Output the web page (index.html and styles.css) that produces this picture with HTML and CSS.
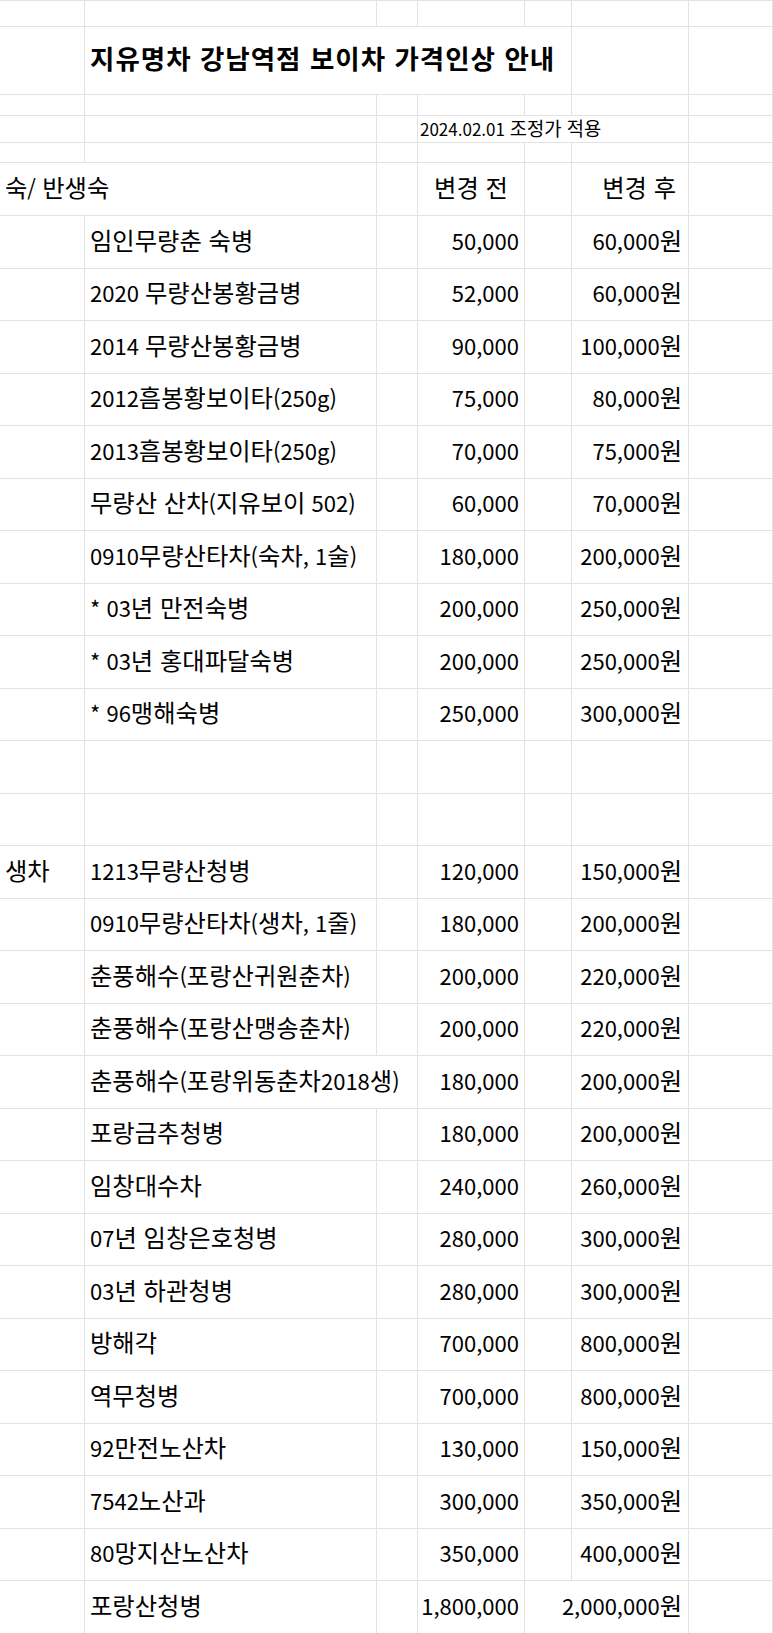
FILE: index.html
```html
<!DOCTYPE html>
<html lang="ko">
<head>
<meta charset="utf-8">
<title>지유명차 강남역점 보이차 가격인상 안내</title>
<link rel="stylesheet" href="styles.css">
</head>
<body>
<div class="sheet">
  <div class="row h-top"><div class="c"></div><div class="c"></div><div class="c"></div><div class="c"></div><div class="c"></div><div class="c"></div><div class="c"></div></div>
  <div class="row h-title"><div class="c"></div><div class="c span4 title"><span class="t">지유명차 강남역점 보이차 가격인상 안내</span></div><div class="c"></div><div class="c"></div></div>
  <div class="row h-21"><div class="c"></div><div class="c"></div><div class="c"></div><div class="c"></div><div class="c"></div><div class="c"></div><div class="c"></div></div>
  <div class="row h-27"><div class="c"></div><div class="c"></div><div class="c"></div><div class="c span3 date"><span class="t">2024.02.01 <span class="k">조정가 적용</span></span></div><div class="c"></div></div>
  <div class="row h-20"><div class="c"></div><div class="c"></div><div class="c"></div><div class="c"></div><div class="c"></div><div class="c"></div><div class="c"></div></div>
  <div class="row h-head"><div class="c span2 name"><span class="t"><span class="k">숙</span>/ <span class="k">반생숙</span></span></div><div class="c"></div><div class="c center"><span class="t k">변경 전</span></div><div class="c"></div><div class="c head-after"><span class="t k">변경 후</span></div><div class="c"></div></div>

  <div class="row item"><div class="c"></div><div class="c name"><span class="t k">임인무량춘 숙병</span></div><div class="c"></div><div class="c num"><span class="t">50,000</span></div><div class="c"></div><div class="c won"><span class="t">60,000<span class="k">원</span></span></div><div class="c"></div></div>
  <div class="row item"><div class="c"></div><div class="c name"><span class="t">2020 <span class="k">무량산봉황금병</span></span></div><div class="c"></div><div class="c num"><span class="t">52,000</span></div><div class="c"></div><div class="c won"><span class="t">60,000<span class="k">원</span></span></div><div class="c"></div></div>
  <div class="row item"><div class="c"></div><div class="c name"><span class="t">2014 <span class="k">무량산봉황금병</span></span></div><div class="c"></div><div class="c num"><span class="t">90,000</span></div><div class="c"></div><div class="c won"><span class="t">100,000<span class="k">원</span></span></div><div class="c"></div></div>
  <div class="row item"><div class="c"></div><div class="c name"><span class="t">2012<span class="k">흠봉황보이타</span>(250g)</span></div><div class="c"></div><div class="c num"><span class="t">75,000</span></div><div class="c"></div><div class="c won"><span class="t">80,000<span class="k">원</span></span></div><div class="c"></div></div>
  <div class="row item"><div class="c"></div><div class="c name"><span class="t">2013<span class="k">흠봉황보이타</span>(250g)</span></div><div class="c"></div><div class="c num"><span class="t">70,000</span></div><div class="c"></div><div class="c won"><span class="t">75,000<span class="k">원</span></span></div><div class="c"></div></div>
  <div class="row item"><div class="c"></div><div class="c name"><span class="t"><span class="k">무량산 산차</span>(<span class="k">지유보이</span> 502)</span></div><div class="c"></div><div class="c num"><span class="t">60,000</span></div><div class="c"></div><div class="c won"><span class="t">70,000<span class="k">원</span></span></div><div class="c"></div></div>
  <div class="row item"><div class="c"></div><div class="c name"><span class="t">0910<span class="k">무량산타차</span>(<span class="k">숙차</span>, 1<span class="k">술</span>)</span></div><div class="c"></div><div class="c num"><span class="t">180,000</span></div><div class="c"></div><div class="c won"><span class="t">200,000<span class="k">원</span></span></div><div class="c"></div></div>
  <div class="row item"><div class="c"></div><div class="c name"><span class="t">* 03<span class="k">년 만전숙병</span></span></div><div class="c"></div><div class="c num"><span class="t">200,000</span></div><div class="c"></div><div class="c won"><span class="t">250,000<span class="k">원</span></span></div><div class="c"></div></div>
  <div class="row item"><div class="c"></div><div class="c name"><span class="t">* 03<span class="k">년 홍대파달숙병</span></span></div><div class="c"></div><div class="c num"><span class="t">200,000</span></div><div class="c"></div><div class="c won"><span class="t">250,000<span class="k">원</span></span></div><div class="c"></div></div>
  <div class="row item"><div class="c"></div><div class="c name"><span class="t">* 96<span class="k">맹해숙병</span></span></div><div class="c"></div><div class="c num"><span class="t">250,000</span></div><div class="c"></div><div class="c won"><span class="t">300,000<span class="k">원</span></span></div><div class="c"></div></div>
  <div class="row item"><div class="c"></div><div class="c"></div><div class="c"></div><div class="c"></div><div class="c"></div><div class="c"></div><div class="c"></div></div>
  <div class="row item"><div class="c"></div><div class="c"></div><div class="c"></div><div class="c"></div><div class="c"></div><div class="c"></div><div class="c"></div></div>

  <div class="row item"><div class="c name"><span class="t k">생차</span></div><div class="c name"><span class="t">1213<span class="k">무량산청병</span></span></div><div class="c"></div><div class="c num"><span class="t">120,000</span></div><div class="c"></div><div class="c won"><span class="t">150,000<span class="k">원</span></span></div><div class="c"></div></div>
  <div class="row item"><div class="c"></div><div class="c name"><span class="t">0910<span class="k">무량산타차</span>(<span class="k">생차</span>, 1<span class="k">줄</span>)</span></div><div class="c"></div><div class="c num"><span class="t">180,000</span></div><div class="c"></div><div class="c won"><span class="t">200,000<span class="k">원</span></span></div><div class="c"></div></div>
  <div class="row item"><div class="c"></div><div class="c name"><span class="t"><span class="k">춘풍해수</span>(<span class="k">포랑산귀원춘차</span>)</span></div><div class="c"></div><div class="c num"><span class="t">200,000</span></div><div class="c"></div><div class="c won"><span class="t">220,000<span class="k">원</span></span></div><div class="c"></div></div>
  <div class="row item"><div class="c"></div><div class="c name"><span class="t"><span class="k">춘풍해수</span>(<span class="k">포랑산맹송춘차</span>)</span></div><div class="c"></div><div class="c num"><span class="t">200,000</span></div><div class="c"></div><div class="c won"><span class="t">220,000<span class="k">원</span></span></div><div class="c"></div></div>
  <div class="row item"><div class="c"></div><div class="c span2 name"><span class="t"><span class="k">춘풍해수</span>(<span class="k">포랑위동춘차</span>2018<span class="k">생</span>)</span></div><div class="c num"><span class="t">180,000</span></div><div class="c"></div><div class="c won"><span class="t">200,000<span class="k">원</span></span></div><div class="c"></div></div>
  <div class="row item"><div class="c"></div><div class="c name"><span class="t k">포랑금추청병</span></div><div class="c"></div><div class="c num"><span class="t">180,000</span></div><div class="c"></div><div class="c won"><span class="t">200,000<span class="k">원</span></span></div><div class="c"></div></div>
  <div class="row item"><div class="c"></div><div class="c name"><span class="t k">임창대수차</span></div><div class="c"></div><div class="c num"><span class="t">240,000</span></div><div class="c"></div><div class="c won"><span class="t">260,000<span class="k">원</span></span></div><div class="c"></div></div>
  <div class="row item"><div class="c"></div><div class="c name"><span class="t">07<span class="k">년 임창은호청병</span></span></div><div class="c"></div><div class="c num"><span class="t">280,000</span></div><div class="c"></div><div class="c won"><span class="t">300,000<span class="k">원</span></span></div><div class="c"></div></div>
  <div class="row item"><div class="c"></div><div class="c name"><span class="t">03<span class="k">년 하관청병</span></span></div><div class="c"></div><div class="c num"><span class="t">280,000</span></div><div class="c"></div><div class="c won"><span class="t">300,000<span class="k">원</span></span></div><div class="c"></div></div>
  <div class="row item"><div class="c"></div><div class="c name"><span class="t k">방해각</span></div><div class="c"></div><div class="c num"><span class="t">700,000</span></div><div class="c"></div><div class="c won"><span class="t">800,000<span class="k">원</span></span></div><div class="c"></div></div>
  <div class="row item"><div class="c"></div><div class="c name"><span class="t k">역무청병</span></div><div class="c"></div><div class="c num"><span class="t">700,000</span></div><div class="c"></div><div class="c won"><span class="t">800,000<span class="k">원</span></span></div><div class="c"></div></div>
  <div class="row item"><div class="c"></div><div class="c name"><span class="t">92<span class="k">만전노산차</span></span></div><div class="c"></div><div class="c num"><span class="t">130,000</span></div><div class="c"></div><div class="c won"><span class="t">150,000<span class="k">원</span></span></div><div class="c"></div></div>
  <div class="row item"><div class="c"></div><div class="c name"><span class="t">7542<span class="k">노산과</span></span></div><div class="c"></div><div class="c num"><span class="t">300,000</span></div><div class="c"></div><div class="c won"><span class="t">350,000<span class="k">원</span></span></div><div class="c"></div></div>
  <div class="row item"><div class="c"></div><div class="c name"><span class="t">80<span class="k">망지산노산차</span></span></div><div class="c"></div><div class="c num"><span class="t">350,000</span></div><div class="c"></div><div class="c won"><span class="t">400,000<span class="k">원</span></span></div><div class="c"></div></div>
  <div class="row item"><div class="c"></div><div class="c name"><span class="t k">포랑산청병</span></div><div class="c"></div><div class="c num"><span class="t">1,800,000</span></div><div class="c span2 won"><span class="t">2,000,000<span class="k">원</span></span></div><div class="c"></div></div>
</div>
</body>
</html>
```
FILE: styles.css
```css
html, body {
  margin: 0;
  padding: 0;
  background: #ffffff;
}

body {
  font-family: "Noto Sans CJK KR", "Malgun Gothic", "Noto Sans", sans-serif;
  color: #000000;
  overflow: hidden;
}

.sheet {
  width: 773px;
}

.row {
  display: grid;
  grid-template-columns: 85px 292px 41px 107px 47px 117px 84px;
  box-sizing: border-box;
  border-bottom: 1px solid #e2e2e2;
}

.row.h-top { height: 27px; border-top: 1px solid #e2e2e2; }
.row.h-title { height: 68px; }
.row.h-21 { height: 21px; }
.row.h-27 { height: 27px; }
.row.h-20 { height: 20px; }
.row.h-head { height: 53px; }
.row.item { height: 52.5px; }

.c {
  box-sizing: border-box;
  border-right: 1px solid #e2e2e2;
  display: flex;
  align-items: center;
  font-size: 22px;
  line-height: 24px;
  white-space: nowrap;
  min-width: 0;
  padding-bottom: 4px;
}

.t {
  white-space: pre;
}

.c .k {
  font-size: 24.3px;
}

.span2 { grid-column: span 2; }
.span3 { grid-column: span 3; }
.span4 { grid-column: span 4; }

.name {
  padding-left: 5px;
}

.title {
  padding-left: 5px;
  padding-bottom: 6px;
  font-size: 26.5px;
  letter-spacing: 1px;
  font-weight: 700;
}

.date {
  padding-left: 2px;
  padding-bottom: 1px;
  font-size: 17px;
  line-height: 20px;
}

.date .k {
  font-size: 18.8px;
}

.center {
  justify-content: center;
}

.num {
  justify-content: flex-end;
  padding-right: 5px;
}

.won {
  justify-content: flex-end;
  padding-right: 6px;
}

.head-after {
  justify-content: flex-end;
  padding-right: 12px;
}
```
